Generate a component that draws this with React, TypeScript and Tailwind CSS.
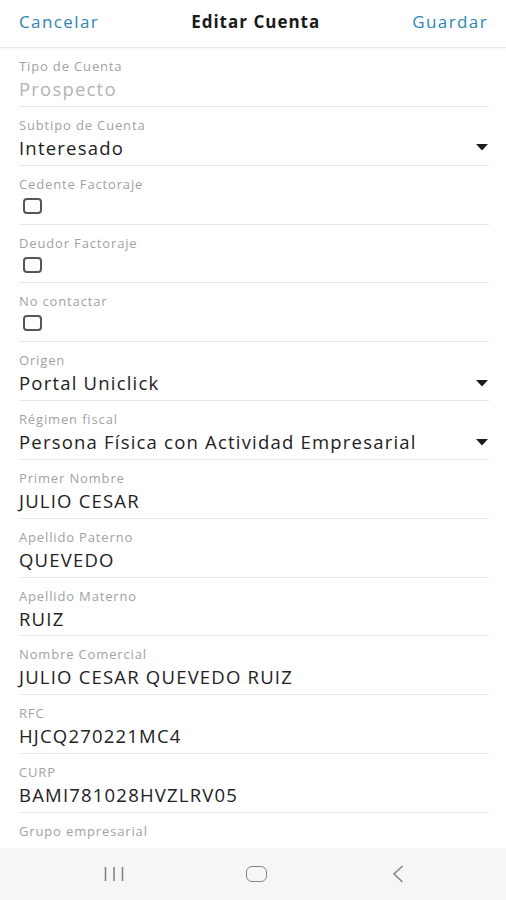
import React from "react";

type Field =
  | { kind: "text"; label: string; value: string; muted?: boolean }
  | { kind: "select"; label: string; value: string }
  | { kind: "check"; label: string };

const FIELDS: Field[] = [
  { kind: "text", label: "Tipo de Cuenta", value: "Prospecto", muted: true },
  { kind: "select", label: "Subtipo de Cuenta", value: "Interesado" },
  { kind: "check", label: "Cedente Factoraje" },
  { kind: "check", label: "Deudor Factoraje" },
  { kind: "check", label: "No contactar" },
  { kind: "select", label: "Origen", value: "Portal Uniclick" },
  { kind: "select", label: "Régimen fiscal", value: "Persona Física con Actividad Empresarial" },
  { kind: "text", label: "Primer Nombre", value: "JULIO CESAR" },
  { kind: "text", label: "Apellido Paterno", value: "QUEVEDO" },
  { kind: "text", label: "Apellido Materno", value: "RUIZ" },
  { kind: "text", label: "Nombre Comercial", value: "JULIO CESAR QUEVEDO RUIZ" },
  { kind: "text", label: "RFC", value: "HJCQ270221MC4" },
  { kind: "text", label: "CURP", value: "BAMI781028HVZLRV05" },
  { kind: "text", label: "Grupo empresarial", value: "" },
];

function Caret() {
  return (
    <svg width="12" height="7" viewBox="0 0 12 7" className="shrink-0 mr-[1px]">
      <path d="M0 0 L12 0 L6 6.5 Z" fill="#1c1c1c" />
    </svg>
  );
}

function Row({ field }: { field: Field }) {
  return (
    <div className="mx-[19px] w-[470px] h-[58.85px] border-b border-[#e8e8e8] pt-[9px] flex flex-col">
      <span className="text-[13px] leading-[18px] tracking-[0.85px] text-[#a2a2a2]">{field.label}</span>
      {field.kind === "check" ? (
        <div className="h-[26px] flex items-center pl-[4px]">
          <div className="w-[19px] h-[16px] rounded-[4px] border-2 border-[#555555]" />
        </div>
      ) : (
        <div className="mt-[1px] h-[26px] flex items-center justify-between">
          <span
            className={
              field.kind === "text" && field.muted
                ? "text-[18.5px] leading-[26px] tracking-[1.2px] text-[#b4b4b4]"
                : "text-[18.5px] leading-[26px] tracking-[1.2px] text-[#222222]"
            }
          >
            {field.value}
          </span>
          {field.kind === "select" && <Caret />}
        </div>
      )}
    </div>
  );
}

function NavBar() {
  return (
    <div className="h-[52px] shrink-0 bg-[#f6f6f6] flex items-center justify-center pl-[6px]">
      <div className="w-[142px] flex justify-center">
        <svg width="20" height="16" viewBox="0 0 20 16">
          <path d="M1.5 1 V15 M10 1 V15 M18.5 1 V15" stroke="#858585" strokeWidth="1.6" />
        </svg>
      </div>
      <div className="w-[142px] flex justify-center">
        <div className="w-[21px] h-[16px] rounded-[6px] border-[1.6px] border-[#858585]" />
      </div>
      <div className="w-[142px] flex justify-center">
        <svg width="12" height="18" viewBox="0 0 12 18">
          <path d="M10.5 1 L2 9 L10.5 17" stroke="#858585" strokeWidth="1.5" fill="none" />
        </svg>
      </div>
    </div>
  );
}

export default function App() {
  return (
    <div
      className="w-[506px] h-[900px] bg-white flex flex-col overflow-hidden"
      style={{ fontFamily: "'Open Sans', 'Noto Sans', sans-serif" }}
    >
      <div className="h-[48px] shrink-0 flex items-center justify-between px-[19px] border-b border-[#ececec] shadow-[0_1px_2px_rgba(0,0,0,0.04)]">
        <span className="text-[17px] tracking-[1.4px] text-[#2c86b3] -mt-[3px]">Cancelar</span>
        <span className="text-[17px] tracking-[1px] font-bold text-[#1a1a1a] -mt-[3px]">Editar Cuenta</span>
        <span className="text-[17px] tracking-[1.4px] text-[#2c86b3] -mt-[3px] -mr-[1px]">Guardar</span>
      </div>
      <div className="flex-1 overflow-hidden">
        {FIELDS.map((f) => (
          <Row key={f.label} field={f} />
        ))}
      </div>
      <NavBar />
    </div>
  );
}
